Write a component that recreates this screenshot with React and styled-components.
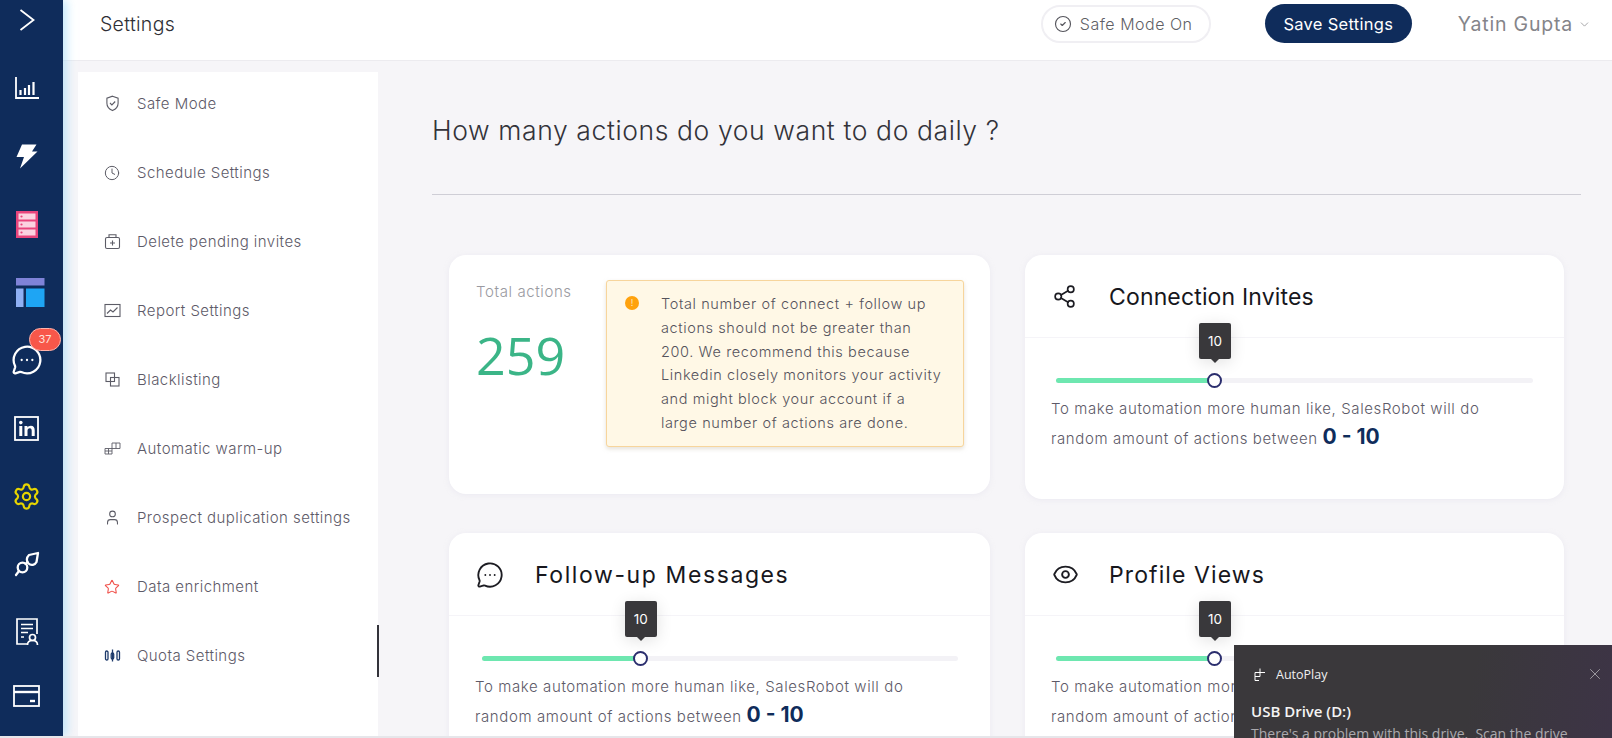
import React from 'react'
import styled, { createGlobalStyle } from 'styled-components'
import { ChevronDown, Settings as Gear, Share2, Eye, Star, User, Clock, X, CircleCheck, MessageCircleMore } from 'lucide-react'

const GlobalStyle = createGlobalStyle`
    html, body {
        margin: 0;
        height: 100%;
        overflow: hidden;
        background: #f6f5f8;
        font-family: "Inter", "Open Sans", sans-serif;
    }
    * { box-sizing: border-box; }
`

const OpenIcon = () => (
    <svg width="16" height="22" viewBox="0 0 16 22" fill="none" stroke="#fff" strokeWidth="1.8">
        <path d="M1.500 1l13 10-13 10" />
    </svg>
)
const ChartIcon = () => (
    <svg width="26" height="24" viewBox="0 0 26 24" fill="none" stroke="#fff">
        <path d="M2 1v21h23" strokeWidth="1.8" />
        <path d="M6.500 19v-5M11 19v-7M15 19v-10M19.500 19V6" strokeWidth="2.200" />
    </svg>
)
const BoltIcon = () => (
    <svg width="22" height="25" viewBox="0 0 22 25" fill="#fff">
        <path d="M6 .5h14.500L16 7.500h5.500L4 24.500l4-11.500H.5z" />
    </svg>
)
const ServerIcon = () => (
    <svg width="22" height="27" viewBox="0 0 22 27">
        <rect width="22" height="27" fill="#e8457c" />
        <rect x="2.500" y="2.500" width="17" height="6" fill="#fbd3e0" />
        <rect x="2.500" y="10.500" width="17" height="6" fill="#fbd3e0" />
        <rect x="2.500" y="18.500" width="17" height="6" fill="#fbd3e0" />
        <circle cx="5.500" cy="5.500" r="1.100" fill="#e8457c" />
        <circle cx="5.500" cy="13.500" r="1.100" fill="#e8457c" />
        <circle cx="5.500" cy="21.500" r="1.100" fill="#e8457c" />
    </svg>
)
const LayoutIcon = () => (
    <svg width="29" height="29" viewBox="0 0 29 29">
        <rect width="28.500" height="7.500" fill="#7f83d8" />
        <rect y="10.500" width="7.500" height="18.500" fill="#8fb0f4" />
        <rect x="10" y="10.500" width="18.500" height="18.500" fill="#1ea5f4" />
    </svg>
)
const LinkedinIcon = () => (
    <svg width="25" height="25" viewBox="0 0 25 25" fill="none">
        <rect x="1" y="1" width="23" height="23" stroke="#fff" strokeWidth="1.800" />
        <circle cx="6.800" cy="6.600" r="1.800" fill="#fff" />
        <path d="M5.300 10h3v10h-3zM10.500 10h2.900v1.500c.7-1.100 1.900-1.800 3.400-1.800 2.700 0 3.900 1.700 3.900 4.600V20h-3v-5.200c0-1.500-.5-2.500-1.900-2.500-1.500 0-2.300 1-2.300 2.600V20h-3z" fill="#fff" />
    </svg>
)
const PlugIcon = () => (
    <svg width="26" height="26" viewBox="0 0 26 26" fill="none" stroke="#fff" strokeWidth="2.300" strokeLinecap="round" strokeLinejoin="round">
        <path d="M15 4l9-2-1.500 9c-1.500 3-5.500 4-8 1.500S12.500 6.500 15 4z" />
        <circle cx="8.500" cy="16.500" r="4.800" />
        <path d="M5 20l-3 4M11.500 13l2-2" />
    </svg>
)
const ReportIcon = () => (
    <svg width="24" height="28" viewBox="0 0 24 28" fill="none" stroke="#fff" strokeWidth="1.700">
        <path d="M13 26H2V1h20v15" />
        <path d="M6 6.500h12M6 10.500h12M6 14.500h7M6 19h3" />
        <circle cx="17.500" cy="19.500" r="3" />
        <path d="M12.500 27c0-3 2-4.500 5-4.500s5 1.500 5 4.500" />
    </svg>
)
const CardIcon = () => (
    <svg width="27" height="22" viewBox="0 0 27 22" fill="none" stroke="#fff" strokeWidth="1.800">
        <rect x="1" y="1" width="25" height="20" />
        <path d="M1 7h25" strokeWidth="2.400" />
        <path d="M17 16h5" strokeWidth="2.400" />
    </svg>
)

const MENU_STROKE = '#5c5c66'
const MenuSvg = ({ children }) => (
    <svg width="17" height="17" viewBox="0 0 17 17" fill="none" stroke={MENU_STROKE} strokeWidth="1.100">{children}</svg>
)

const menuItems = [
    { label: 'Safe Mode', icon: <MenuSvg><path d="M8.500 1.200l5.600 2v5c0 3.600-2.500 6-5.600 7.400C5.400 14.200 2.900 11.800 2.900 8.200v-5z" /><path d="M6 8l1.900 1.900L11.200 6.500" /></MenuSvg> },
    { label: 'Schedule Settings', icon: <Clock size={16} color={MENU_STROKE} strokeWidth={1.5} /> },
    { label: 'Delete pending invites', icon: <MenuSvg><rect x="1.500" y="4.500" width="14" height="11" rx="1.500" /><path d="M5 4.500V1.800h7v2.700M8.500 7.500v5M6 10h5" /></MenuSvg> },
    { label: 'Report Settings', icon: <MenuSvg><rect x="1" y="2.500" width="15" height="12" /><path d="M3 11.500l3.500-3.500 2.500 2 4.500-4.500" /></MenuSvg> },
    { label: 'Blacklisting', icon: <MenuSvg><rect x="2" y="2" width="8.500" height="8.500" /><rect x="6.500" y="6.500" width="8.500" height="8.500" /></MenuSvg> },
    { label: 'Automatic warm-up', icon: <MenuSvg><g strokeWidth="0.900"><path d="M1 8.500h7v5.500H1zM4.500 8.500v5.500M1 11h7M8 3h8v5.500H8zM12 3v5.500" /></g></MenuSvg> },
    { label: 'Prospect duplication settings', icon: <User size={17} color={MENU_STROKE} strokeWidth={1.5} /> },
    { label: 'Data enrichment', icon: <Star size={16} color="#f0504a" strokeWidth={1.6} /> },
    { label: 'Quota Settings', icon: <MenuSvg><g stroke="#1d3a6b" strokeWidth="1.300"><rect x="1.500" y="4" width="2.500" height="9" rx="1.200" /><rect x="7.200" y="6" width="2.500" height="6" rx="1.200" /><rect x="13" y="4" width="2.500" height="9" rx="1.200" /><path d="M8.500 2.500v12" /></g></MenuSvg> },
]

const railItems = [
    { key: 'open', icon: <OpenIcon /> },
    { key: 'chart', icon: <ChartIcon /> },
    { key: 'bolt', icon: <BoltIcon /> },
    { key: 'server', icon: <ServerIcon /> },
    { key: 'layout', icon: <LayoutIcon />, shift: 4 },
    { key: 'chat', icon: <MessageCircleMore size={32} color="#fff" strokeWidth={1.7} />, badge: 37 },
    { key: 'linkedin', icon: <LinkedinIcon /> },
    { key: 'gear', icon: <Gear size={29} color="#e6d400" strokeWidth={1.8} /> },
    { key: 'plug', icon: <PlugIcon /> },
    { key: 'report', icon: <ReportIcon /> },
    { key: 'card', icon: <CardIcon /> },
]

const sliders = [
    { title: 'Follow-up Messages', tracking: 1.6, icon: <MessageCircleMore size={28} color="#1c1c22" strokeWidth={1.6} />, value: 10 },
    { title: 'Profile Views', tracking: 1.1, icon: <Eye size={27} color="#1c1c22" strokeWidth={1.7} />, value: 10 },
]

function SliderCard({ title, icon, value, tracking, max = 30 }) {
    return (
        <Card>
            <CardHead>
                <CardIconBox>{icon}</CardIconBox>
                <CardTitle $tracking={tracking}>{title}</CardTitle>
            </CardHead>
            <Track>
                <Fill style={{ width: `${(value / max) * 100}%` }}>
                    <Thumb />
                    <Tip>{value}</Tip>
                </Fill>
            </Track>
            <Hint>
                To make automation more human like, SalesRobot will do<br />
                random amount of actions between <Range>0 - {value}</Range>
            </Hint>
        </Card>
    )
}

export default function App() {
    return (
        <Page>
            <GlobalStyle />
            <Rail>
                {railItems.map(item => (
                    <RailItem key={item.key} $shift={item.shift}>
                        {item.icon}
                        {item.badge && <Badge>{item.badge}</Badge>}
                    </RailItem>
                ))}
            </Rail>
            <Main>
                <Header>
                    <PageTitle>Settings</PageTitle>
                    <SafePill><CircleCheck size={18} color="#55555c" strokeWidth={1.5} /> Safe Mode On</SafePill>
                    <SaveButton>Save Settings</SaveButton>
                    <UserName>Yatin Gupta <ChevronDown size={13} color="#8b8b8f" strokeWidth={1.4} /></UserName>
                </Header>
                <Body>
                    <SideMenu>
                        {menuItems.map(item => (
                            <MenuRow key={item.label}>
                                <MenuIcon>{item.icon}</MenuIcon>
                                {item.label}
                            </MenuRow>
                        ))}
                        <ScrollMark />
                    </SideMenu>
                    <Content>
                        <Heading>How many actions do you want to do daily ?</Heading>
                        <Rule />
                        <CardGrid>
                            <TotalCard>
                                <TotalCol>
                                    <TotalLabel>Total actions</TotalLabel>
                                    <TotalValue>259</TotalValue>
                                </TotalCol>
                                <Alert>
                                    <AlertDot>!</AlertDot>
                                    <AlertText>
                                        Total number of connect + follow up<br />
                                        actions should not be greater than<br />
                                        200. We recommend this because<br />
                                        Linkedin closely monitors your activity<br />
                                        and might block your account if a<br />
                                        large number of actions are done.
                                    </AlertText>
                                </Alert>
                            </TotalCard>
                            <SliderCard title="Connection Invites" tracking={0.15} icon={<Share2 size={25} color="#1c1c22" strokeWidth={1.6} />} value={10} />
                            {sliders.map(s => <SliderCard key={s.title} {...s} />)}
                        </CardGrid>
                    </Content>
                </Body>
            </Main>
            <Toast>
                <ToastTop>
                    <ToastApp>
                        <svg width="12" height="13" viewBox="0 0 12 13" fill="none" stroke="#fff" strokeWidth="1"><path d="M1 4.500h10M6 .5v8M1 8.500h5M1 4.500v8h4" /></svg>
                        AutoPlay
                    </ToastApp>
                    <X size={18} color="#a5a3a8" strokeWidth={1.2} />
                </ToastTop>
                <ToastTitle>USB Drive (D:)</ToastTitle>
                <ToastText>There's a problem with this drive.  Scan the drive</ToastText>
            </Toast>
        </Page>
    )
}

const Page = styled.div`
    display: flex;
    width: 1612px;
    height: 738px;
    overflow: hidden;
    border-bottom: 2px solid #e6e6ea;
`
const Rail = styled.nav`
    position: relative;
    z-index: 2;
    flex: 0 0 63px;
    display: flex;
    flex-direction: column;
    background: #0f2c5b;
    box-shadow: 4px 0 9px rgba(150, 215, 250, 0.55);
`
const RailItem = styled.div`
    position: relative;
    height: 68px;
    padding: 0 ${p => (p.$shift ? 0 : 10)}px 0 ${p => (p.$shift ? 16 : 0)}px;
    display: flex;
    align-items: center;
    justify-content: ${p => (p.$shift ? 'flex-start' : 'center')};
    &:first-child {
        height: 54px;
        padding-bottom: 14px;
    }
    &:last-child { margin-top: -4px; }
`
const Badge = styled.span`
    position: absolute;
    top: 2px;
    left: 29px;
    width: 32px;
    height: 23px;
    border-radius: 12px;
    border: 1px solid #ffb3aa;
    background: #f8574a;
    color: #ffe1dc;
    font-size: 11px;
    line-height: 21px;
    text-align: center;
`
const Main = styled.div`
    flex: 1;
    min-width: 0;
    display: flex;
    flex-direction: column;
`
const Header = styled.header`
    flex: 0 0 61px;
    display: flex;
    align-items: flex-start;
    background: #fff;
    border-bottom: 1px solid #ecebef;
    padding: 4px 21px 0 37px;
`
const PageTitle = styled.div`
    flex: 1;
    margin-top: 8px;
    font-size: 19.500px;
    font-weight: 300;
    letter-spacing: 0.3px;
    color: #2f2f35;
`
const SafePill = styled.div`
    display: flex;
    align-items: center;
    gap: 8px;
    width: 170px;
    height: 38px;
    margin: 1px 54px 0 0;
    padding-left: 11px;
    border: 2px solid #f0eff3;
    border-radius: 19px;
    font-size: 16px;
    font-weight: 300;
    letter-spacing: 0.5px;
    color: #5f5f66;
`
const SaveButton = styled.button`
    width: 147px;
    height: 39px;
    margin-right: 46px;
    border: none;
    border-radius: 20px;
    background: #0f2c5b;
    color: #fff;
    font-family: inherit;
    font-size: 16.500px;
    letter-spacing: 0.3px;
`
const UserName = styled.div`
    display: flex;
    align-items: center;
    gap: 5px;
    margin-top: 8px;
    font-size: 19.500px;
    letter-spacing: 0.8px;
    color: #85858a;
`
const Body = styled.div`
    flex: 1;
    min-height: 0;
    display: flex;
    padding: 11px 0 0 15px;
`
const SideMenu = styled.aside`
    position: relative;
    flex: 0 0 300px;
    background: #fff;
`
const MenuRow = styled.div`
    display: flex;
    align-items: center;
    height: 69px;
    padding-left: 26px;
    font-size: 15px;
    font-weight: 300;
    letter-spacing: 0.45px;
    color: #5d5a68;
    &:first-child { margin-top: -3px; }
`
const MenuIcon = styled.span`
    flex: 0 0 33px;
    display: flex;
`
const ScrollMark = styled.div`
    position: absolute;
    top: 553px;
    right: -1px;
    width: 2px;
    height: 52px;
    background: #33333a;
`
const Content = styled.main`
    flex: 1;
    min-width: 0;
    padding-left: 54px;
`
const Heading = styled.h1`
    margin: 42px 0 0;
    font-size: 26.500px;
    line-height: 32px;
    font-weight: 300;
    letter-spacing: 0.6px;
    color: #33333a;
`
const Rule = styled.div`
    width: 1149px;
    height: 1px;
    margin-top: 48px;
    background: #cfced6;
`
const CardGrid = styled.div`
    display: grid;
    grid-template-columns: 541px 539px;
    column-gap: 35px;
    row-gap: 34px;
    align-items: start;
    margin: 60px 0 0 17px;
`
const Card = styled.section`
    height: 244px;
    background: #fff;
    border-radius: 17px;
    box-shadow: 0 1px 5px rgba(225, 224, 235, 0.5);
    &:nth-child(n + 3) { height: 260px; }
`
const TotalCard = styled(Card)`
    display: flex;
    height: 239px;
    padding: 25px 26px 0 27px;
`
const TotalCol = styled.div`
    flex: 0 0 130px;
`
const TotalLabel = styled.div`
    font-size: 15px;
    line-height: 24px;
    font-weight: 300;
    letter-spacing: 0.6px;
    color: #9a9aa1;
`
const TotalValue = styled.div`
    margin-top: 16px;
    font-family: "Open Sans", sans-serif;
    font-size: 52px;
    line-height: 70px;
    font-weight: 400;
    color: #3bb587;
`
const Alert = styled.div`
    flex: 1;
    display: flex;
    height: 167px;
    padding: 11px 0 0 18px;
    background: #fff8e6;
    border: 1px solid #f7d59c;
    border-radius: 3px;
    box-shadow: 0 2px 4px rgba(190, 180, 160, 0.4);
`
const AlertDot = styled.span`
    flex: 0 0 14px;
    height: 14px;
    margin: 4px 22px 0 0;
    border-radius: 50%;
    background: #ffa20d;
    color: #ffe7ba;
    font-size: 9px;
    line-height: 14px;
    text-align: center;
`
const AlertText = styled.div`
    font-size: 14.500px;
    line-height: 23.800px;
    font-weight: 300;
    letter-spacing: 0.6px;
    color: #55535c;
    white-space: nowrap;
`
const CardHead = styled.div`
    display: flex;
    align-items: center;
    height: 83px;
    padding: 1px 0 0 27px;
    border-bottom: 1px solid #f5f4f8;
`
const CardIconBox = styled.span`
    flex: 0 0 59px;
    display: flex;
`
const CardTitle = styled.h2`
    margin: 0;
    font-size: 23px;
    font-weight: 400;
    letter-spacing: ${p => p.$tracking}px;
    color: #17171d;
    ${Card}:nth-child(even) & { margin-left: -2px; }
`
const Track = styled.div`
    position: relative;
    width: 476px;
    height: 5px;
    margin: 40px 0 0 33px;
    border-radius: 3px;
    background: #f3f2f6;
    ${Card}:nth-child(even) & {
        width: 477px;
        margin-left: 31px;
    }
`
const Fill = styled.div`
    position: relative;
    height: 100%;
    border-radius: 3px;
    background: #6ee7b0;
`
const Thumb = styled.span`
    position: absolute;
    top: -5px;
    right: -7px;
    width: 15px;
    height: 15px;
    border-radius: 50%;
    border: 2px solid #2b2e6e;
    background: #fff;
`
const Tip = styled.span`
    position: absolute;
    top: -55px;
    right: -16px;
    width: 32px;
    height: 36px;
    border-radius: 2px;
    background: #39383b;
    color: #fff;
    font-size: 13.500px;
    line-height: 36px;
    text-align: center;
    box-shadow: 0 3px 16px rgba(0, 0, 0, 0.12);
    &::after {
        content: "";
        position: absolute;
        left: 12px;
        bottom: -4px;
        border: 4px solid transparent;
        border-bottom: none;
        border-top-color: #39383b;
    }
`
const Hint = styled.p`
    margin: 11px 0 0 26px;
    font-size: 15px;
    line-height: 30px;
    font-weight: 300;
    letter-spacing: 0.6px;
    color: #5d5a68;
    white-space: nowrap;
`
const Range = styled.b`
    font-size: 21px;
    line-height: 1;
    font-weight: 700;
    letter-spacing: 0;
    color: #0f2c5b;
`
const Toast = styled.aside`
    position: fixed;
    left: 1234px;
    top: 645px;
    z-index: 5;
    width: 378px;
    height: 93px;
    padding: 19px 8px 0 17px;
    overflow: hidden;
    background: linear-gradient(100deg, #3a383b 62%, #3d3446 100%);
    font-family: "Open Sans", sans-serif;
`
const ToastTop = styled.div`
    display: flex;
    align-items: center;
    justify-content: space-between;
    height: 20px;
`
const ToastApp = styled.div`
    display: flex;
    align-items: center;
    gap: 10px;
    padding-left: 3px;
    font-size: 12.500px;
    color: #f0f0f0;
`
const ToastTitle = styled.div`
    margin-top: 17px;
    font-size: 15px;
    line-height: 21px;
    font-weight: 600;
    color: #f4f4f4;
`
const ToastText = styled.div`
    margin-top: 2px;
    font-size: 14px;
    line-height: 20px;
    color: #aaa9ad;
    white-space: pre;
`
